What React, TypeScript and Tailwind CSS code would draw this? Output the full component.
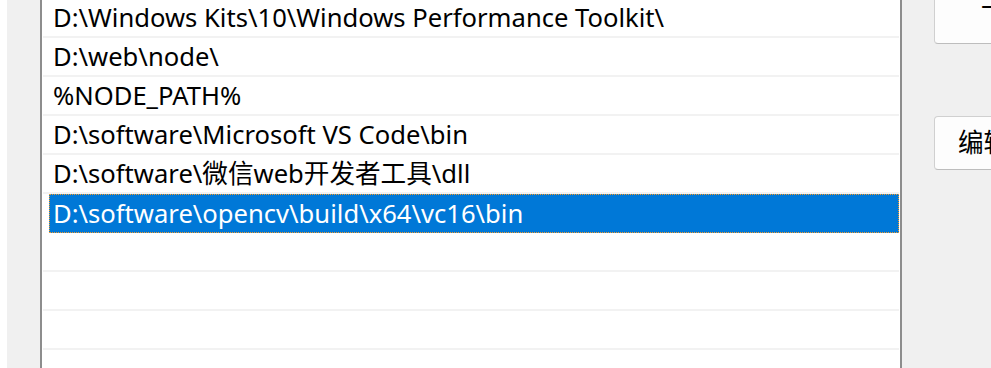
const paths = [
  "D:\\Windows Kits\\10\\Windows Performance Toolkit\\",
  "D:\\web\\node\\",
  "%NODE_PATH%",
  "D:\\software\\Microsoft VS Code\\bin",
  "D:\\software\\微信web开发者工具\\dll",
  "D:\\software\\opencv\\build\\x64\\vc16\\bin",
  "",
  "",
  "",
];

const selectedIndex = 5;

function PathRow({ text, selected }: { text: string; selected: boolean }) {
  return (
    <div
      className={
        selected
          ? "h-[39px] pl-[6px]"
          : "h-[39px] border-b-2 border-[#f2f2f2]"
      }
    >
      <div
        className={
          selected
            ? "flex h-full items-center border border-dotted border-[#f29b2b] bg-[#0078d7] pl-[3px] text-white"
            : "flex h-full items-center pl-[10px] text-black"
        }
      >
        <span className="whitespace-nowrap">{text}</span>
      </div>
    </div>
  );
}

export default function App() {
  return (
    <div
      className="flex h-[368px] w-[991px] overflow-hidden bg-[#f0f0f0] text-[25.6px] leading-none"
      style={{ fontFamily: '"Noto Sans", "Noto Sans CJK SC", sans-serif' }}
    >
      <div className="h-full w-[7px] shrink-0 bg-white" />

      <div className="ml-[33px] -mt-px h-[370px] w-[862px] shrink-0 border-x-2 border-[#8d8d8d] bg-white px-px">
        {paths.map((text, index) => (
          <PathRow
            key={`row-${index}`}
            text={text}
            selected={index === selectedIndex}
          />
        ))}
      </div>

      <div className="ml-[32px] -mt-[10px] flex shrink-0 flex-col gap-[72px]">
        <button
          type="button"
          className="h-[54px] w-[180px] whitespace-nowrap rounded-[4px] border border-[#d0d0d0] border-b-[#bdbdbd] bg-[#fdfdfd] text-black"
        >
          下移(O)
        </button>
        <button
          type="button"
          className="h-[54px] w-[180px] whitespace-nowrap rounded-[4px] border border-[#d0d0d0] border-b-[#bdbdbd] bg-[#fdfdfd] text-black"
        >
          编辑文本(T)
        </button>
      </div>
    </div>
  );
}
